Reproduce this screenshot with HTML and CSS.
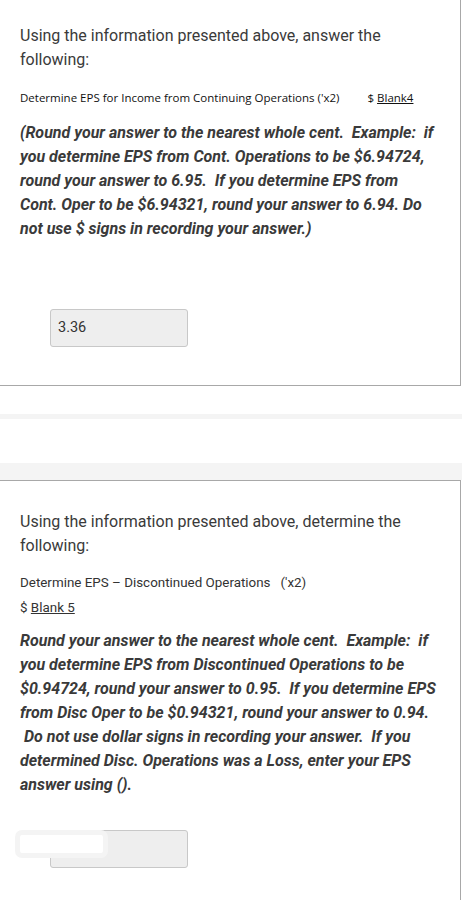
FILE: index.html
```html
<!DOCTYPE html>
<html>
<head>
<meta charset="utf-8">
<link rel="stylesheet" href="styles.css">
</head>
<body>
<div class="card card-first">
  <p class="intro">Using the information presented above, answer the following:</p>
  <p class="small-line">Determine EPS for Income from Continuing Operations ('x2)<span class="blank-ref">$ <u>Blank4</u></span></p>
  <p class="note">(Round your answer to the nearest whole cent.&nbsp; Example:&nbsp; if you determine EPS from Cont. Operations to be $6.94724, round your answer to 6.95.&nbsp; If you determine EPS from Cont. Oper to be $6.94321, round your answer to 6.94. Do not use $ signs in recording your answer.)</p>
  <div class="answer answer-first">3.36</div>
</div>
<div class="gap"></div>
<div class="strip"></div>
<div class="gap2"></div>
<div class="band"></div>
<div class="card card-second">
  <p class="intro">Using the information presented above, determine the following:</p>
  <p class="sub">Determine EPS – Discontinued Operations &nbsp; ('x2)</p>
  <p class="sub">$ <u>Blank 5</u></p>
  <p class="note note-second">Round your answer to the nearest whole cent.&nbsp; Example:&nbsp; if you determine EPS from Discontinued Operations to be $0.94724, round your answer to 0.95.&nbsp; If you determine EPS from Disc Oper to be $0.94321, round your answer to 0.94. &nbsp;Do not use dollar signs in recording your answer.&nbsp; If you determined Disc. Operations was a Loss, enter your EPS answer using ().</p>
  <div class="answer-wrap">
    <div class="answer"></div>
    <div class="redact"></div>
  </div>
</div>
</body>
</html>
```
FILE: styles.css
```css
* { box-sizing: border-box; }
body {
  margin: 0;
  background: #fff;
  font-family: Roboto, "Liberation Sans", sans-serif;
  color: #333;
}
p { margin: 0; }
.card {
  width: 461px;
  border-right: 1px solid #a8a8a8;
  border-bottom: 1px solid #a8a8a8;
  padding-left: 20px;
  padding-right: 20px;
}
.card-first {
  padding-top: 24px;
  padding-right: 24px;
  padding-bottom: 38px;
}
.card-second {
  border-top: 1px solid #a8a8a8;
  padding-top: 29px;
  padding-bottom: 32px;
}
.intro {
  font-size: 16px;
  line-height: 24px;
  color: #3a3a3a;
}
.small-line {
  margin-top: 18px;
  font-family: "Open Sans", sans-serif;
  font-size: 11.5px;
  line-height: 16px;
  color: #111;
}
.blank-ref {
  margin-left: 28px;
}
.note {
  margin-top: 15px;
  font-size: 16px;
  line-height: 24px;
  font-weight: bold;
  font-style: italic;
  color: #3a3a3a;
}
.note-second { margin-top: 9px; }
.sub {
  font-size: 13.4px;
  line-height: 25px;
  color: #333;
}
.card-second .intro + .sub { margin-top: 12px; }
.answer {
  width: 138px;
  height: 38px;
  margin-left: 30px;
  background: #eee;
  border: 1px solid #c8c8c8;
  border-radius: 3px;
  padding: 9px 7px;
  font-size: 14.5px;
  line-height: 18px;
  color: #333;
}
.answer-first { margin-top: 68px; }
.answer-wrap {
  position: relative;
  margin-top: 33px;
}
.redact {
  position: absolute;
  left: -5px;
  top: 0;
  width: 93px;
  height: 28px;
  background: #fff;
  border: 5px solid #f4f4f4;
  border-radius: 7px;
}
.gap { height: 28px; }
.strip { height: 5px; background: #f4f4f4; }
.gap2 { height: 44px; }
.band { height: 17px; background: #f4f4f4; }
```
